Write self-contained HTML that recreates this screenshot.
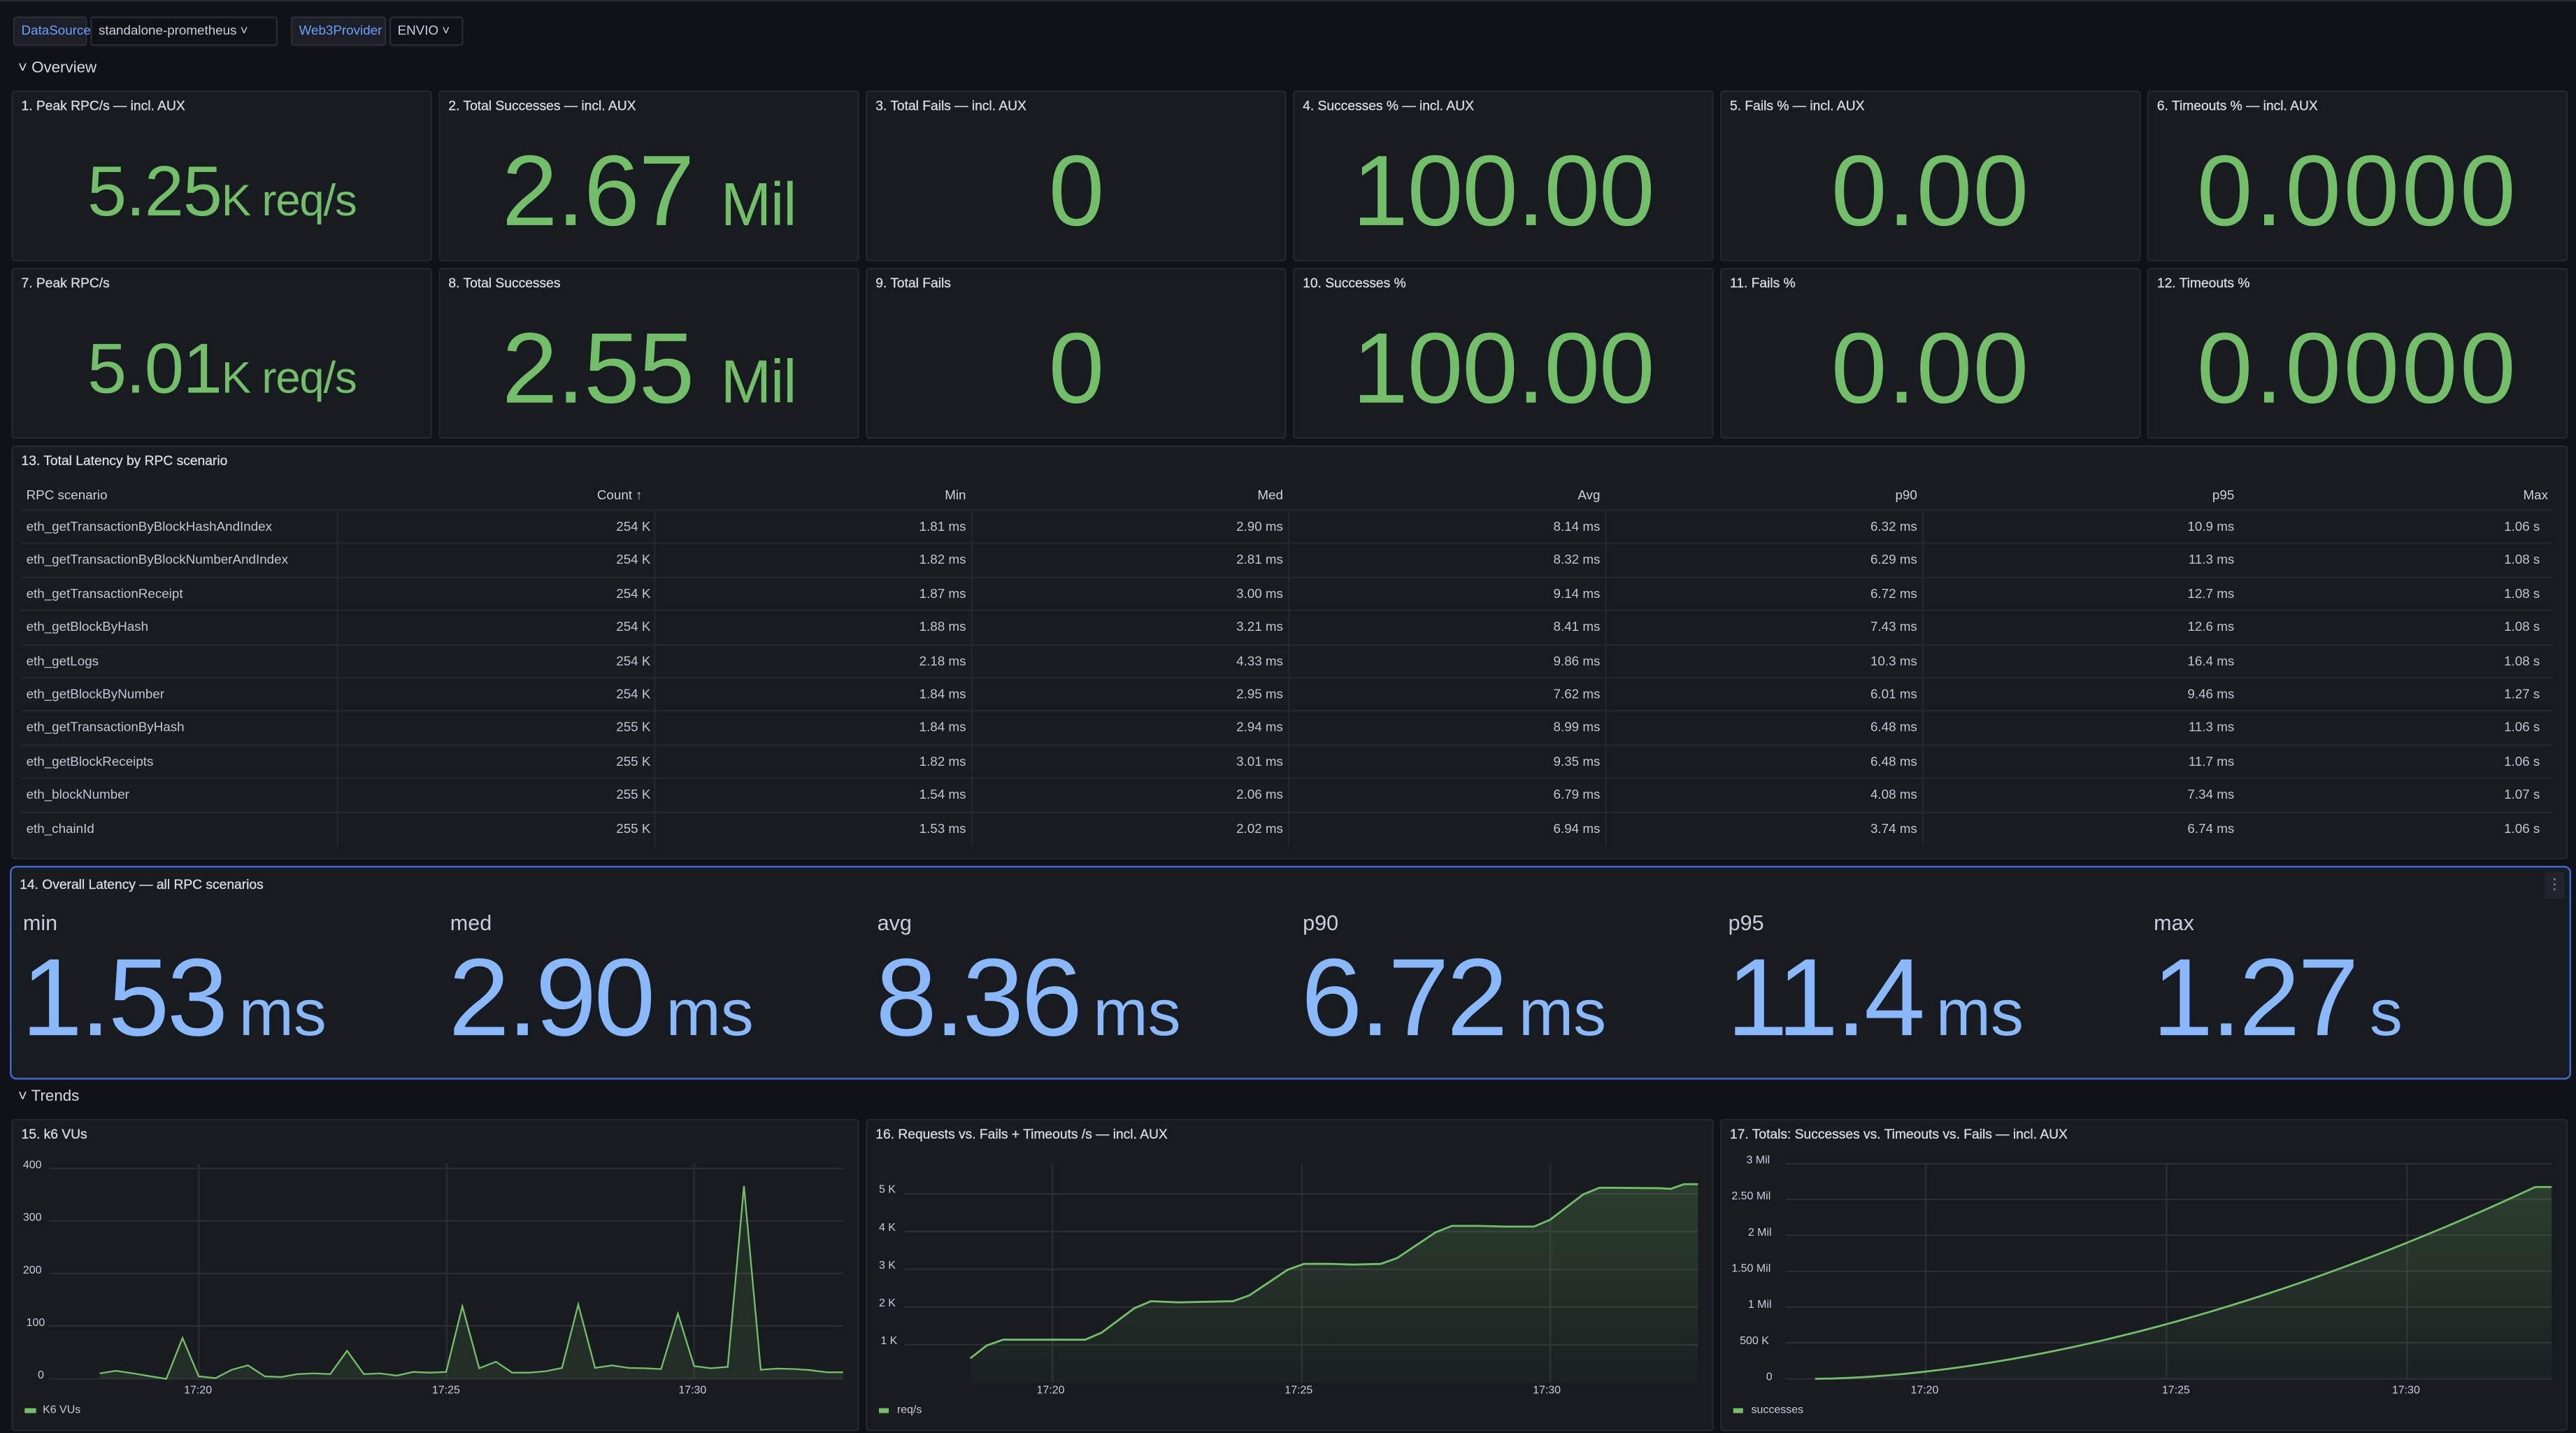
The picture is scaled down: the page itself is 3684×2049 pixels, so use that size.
<!DOCTYPE html>
<html><head><meta charset="utf-8">
<style>
html,body{margin:0;padding:0;background:#111217;width:3684px;height:2048px;overflow:hidden}
#w{position:absolute;left:0;top:0;width:1568px;height:872px;transform:scale(2.34949);transform-origin:0 0;font-family:"Liberation Sans",sans-serif;color:#ccccdc}
.a{position:absolute}
.p{position:absolute;background:#181b1f;border:1px solid #25272c;border-radius:2px;box-sizing:border-box}
.t{position:absolute;left:5px;top:4px;font-size:8.2px;color:#d8d9e0;white-space:nowrap;-webkit-text-stroke:0.15px #d8d9e0}
.s{position:absolute;left:0;right:0;text-align:center;color:#73bf69;line-height:1;white-space:nowrap;letter-spacing:-0.5px}
.ctl{position:absolute;top:10px;height:18px;border:1px solid #2a2d33;box-sizing:border-box;font-size:8px;line-height:16px;padding:0 4px;white-space:nowrap;border-radius:2px}
.lbl{background:#1d2026;color:#6e9fff}
.sel{background:#111217;color:#ccccdc}
.row{position:absolute;left:5px;right:8px;height:20.4px;border-top:1px solid #25272c;font-size:8px;line-height:20px;color:#c4c5cf}
.c{position:absolute;top:0;white-space:nowrap}
.r{text-align:right}
.vs{position:absolute;top:0;height:20.4px;width:1px;background:#25272c}
.lat{position:absolute;top:0;color:#8ab8ff;white-space:nowrap}
.ax{position:absolute;font-size:6.8px;color:#ccccdc;white-space:nowrap}
</style></head><body><div id="w">
<div class="a" style="left:0;top:0;width:1568px;height:1px;background:#25272c"></div>
<div class="ctl lbl" style="left:8px;width:45px">DataSource</div>
<div class="ctl sel" style="left:55px;width:114px">standalone-prometheus &#709;</div>
<div class="ctl lbl" style="left:177px;width:58px">Web3Provider</div>
<div class="ctl sel" style="left:237px;width:45px">ENVIO &#709;</div>
<div class="a" style="left:11px;top:36px;font-size:9.5px;color:#d8d9e0">&#709; Overview</div>

<div class="p" style="left:7px;top:55px;width:256px;height:104px"><div class="t">1. Peak RPC/s — incl. AUX</div><div class="s" style="top:40px;font-size:43px">5.25<span style="font-size:27px">K req/s</span></div></div>
<div class="p" style="left:267px;top:55px;width:256px;height:104px"><div class="t">2. Total Successes — incl. AUX</div><div class="s" style="top:30px;font-size:61px">2.67 <span style="font-size:37px">Mil</span></div></div>
<div class="p" style="left:527px;top:55px;width:256px;height:104px"><div class="t">3. Total Fails — incl. AUX</div><div class="s" style="top:30px;font-size:61px">0</div></div>
<div class="p" style="left:787px;top:55px;width:256px;height:104px"><div class="t">4. Successes % — incl. AUX</div><div class="s" style="top:30px;font-size:61px">100.00</div></div>
<div class="p" style="left:1047px;top:55px;width:256px;height:104px"><div class="t">5. Fails % — incl. AUX</div><div class="s" style="top:30px;font-size:61px;letter-spacing:0.5px">0.00</div></div>
<div class="p" style="left:1307px;top:55px;width:256px;height:104px"><div class="t">6. Timeouts % — incl. AUX</div><div class="s" style="top:30px;font-size:61px;letter-spacing:1.5px">0.0000</div></div>
<div class="p" style="left:7px;top:163px;width:256px;height:104px"><div class="t">7. Peak RPC/s</div><div class="s" style="top:40px;font-size:43px">5.01<span style="font-size:27px">K req/s</span></div></div>
<div class="p" style="left:267px;top:163px;width:256px;height:104px"><div class="t">8. Total Successes</div><div class="s" style="top:30px;font-size:61px">2.55 <span style="font-size:37px">Mil</span></div></div>
<div class="p" style="left:527px;top:163px;width:256px;height:104px"><div class="t">9. Total Fails</div><div class="s" style="top:30px;font-size:61px">0</div></div>
<div class="p" style="left:787px;top:163px;width:256px;height:104px"><div class="t">10. Successes %</div><div class="s" style="top:30px;font-size:61px">100.00</div></div>
<div class="p" style="left:1047px;top:163px;width:256px;height:104px"><div class="t">11. Fails %</div><div class="s" style="top:30px;font-size:61px;letter-spacing:0.5px">0.00</div></div>
<div class="p" style="left:1307px;top:163px;width:256px;height:104px"><div class="t">12. Timeouts %</div><div class="s" style="top:30px;font-size:61px;letter-spacing:1.5px">0.0000</div></div>

<div class="p" style="left:7px;top:271px;width:1556px;height:252px">
<div class="t">13. Total Latency by RPC scenario</div>
<div class="a" style="left:5px;right:8px;top:24px;height:15px;font-size:8px;line-height:12px;color:#d0d1d9">
<span class="c" style="left:3px">RPC scenario</span>
<span class="c r" style="right:1163px">Count &#8593;</span>
<span class="c r" style="right:966px">Min</span>
<span class="c r" style="right:773px">Med</span>
<span class="c r" style="right:580px">Avg</span>
<span class="c r" style="right:387px">p90</span>
<span class="c r" style="right:194px">p95</span>
<span class="c r" style="right:3px">Max</span>
</div>
<div id="rows"></div>
</div>

<div class="p" style="left:6px;top:527px;width:1559px;height:130px;border:1.5px solid #3d71d9;border-radius:4px">
<div class="t" style="top:6px">14. Overall Latency — all RPC scenarios</div>
<div class="a" style="right:3px;top:3px;width:12px;height:16px;background:#22252b;color:#999;font-size:9px;text-align:center;line-height:14px">&#8942;</div>
<div id="lat"></div>
</div>

<div class="a" style="left:11px;top:662px;font-size:9.5px;color:#d8d9e0">&#709; Trends</div>

<div class="p" style="left:7px;top:681px;width:516px;height:190px"><div class="t">15. k6 VUs</div></div>
<div class="p" style="left:527px;top:681px;width:516px;height:190px"><div class="t">16. Requests vs. Fails + Timeouts /s — incl. AUX</div></div>
<div class="p" style="left:1047px;top:681px;width:516px;height:190px"><div class="t">17. Totals: Successes vs. Timeouts vs. Fails — incl. AUX</div></div>

<svg class="a" style="left:0;top:523.5px" width="553" height="348" viewBox="0 0 1568 1568" preserveAspectRatio="none">
<g stroke="#2a2d33" stroke-width="1">
<path vector-effect="non-scaling-stroke" d="M85 843H1455M85 987H1455M85 1131H1455M85 1275H1455M85 1420H1455M343 830V1420M771 830V1420M1198 830V1420"/>
</g>
<path id="vu" fill="rgba(115,191,105,0.12)" stroke="none" d=""/>
<polyline id="vul" fill="none" stroke="#73bf69" stroke-width="1" vector-effect="non-scaling-stroke" points=""/>
</svg>

<svg class="a" style="left:523.5px;top:676.7px" width="1044.5" height="194.9" viewBox="0 0 1568 1374" preserveAspectRatio="none">
<defs><linearGradient id="g" x1="0" y1="0" x2="0" y2="1"><stop offset="0" stop-color="#73bf69" stop-opacity="0.22"/><stop offset="1" stop-color="#73bf69" stop-opacity="0.03"/></linearGradient></defs>
<g stroke="#2a2d33" fill="none">
<path vector-effect="non-scaling-stroke" d="M40 349H765M40 511H765M40 673H765M40 835H765M40 997H765M175 220V1160M403 220V1160M630 220V1160"/>
<path vector-effect="non-scaling-stroke" d="M845 220H1545M845 373H1545M845 527H1545M845 682H1545M845 835H1545M845 988H1545M845 1143H1545M973 220V1143M1193 220V1143M1413 220V1143"/>
</g>
<path fill="url(#g)" d="M100 1055L115 1000L130 975L205 975L220 945L250 840L265 810L290 815L340 810L355 785L390 675L405 650L430 650L450 653L475 650L490 625L525 515L540 487L565 487L590 490L615 490L630 460L660 352L675 323L730 325L740 328L752 308L765 308L765 1160L100 1160Z"/>
<polyline fill="none" stroke="#73bf69" stroke-width="1.2" vector-effect="non-scaling-stroke" points="100,1055 115,1000 130,975 205,975 220,945 250,840 265,810 290,815 340,810 355,785 390,675 405,650 430,650 450,653 475,650 490,625 525,515 540,487 565,487 590,490 615,490 630,460 660,352 675,323 730,325 740,328 752,308 765,308"/>
<path id="sf" fill="url(#g)" d=""/>
<polyline id="sl" fill="none" stroke="#73bf69" stroke-width="1.2" vector-effect="non-scaling-stroke" points=""/>
</svg>

<div class="ax" style="left:14px;top:706px">400</div><div class="ax" style="left:14px;top:738px">300</div><div class="ax" style="left:14px;top:770px">200</div><div class="ax" style="left:16px;top:802px">100</div><div class="ax" style="left:23px;top:834px">0</div>
<div class="ax" style="left:112px;top:843px">17:20</div><div class="ax" style="left:263px;top:843px">17:25</div><div class="ax" style="left:413px;top:843px">17:30</div>
<div class="a" style="left:15px;top:857px;width:7px;height:2.5px;background:#73bf69"></div><div class="ax" style="left:26px;top:855px">K6 VUs</div>

<div class="ax" style="left:535px;top:721px">5 K</div><div class="ax" style="left:535px;top:744px">4 K</div><div class="ax" style="left:535px;top:767px">3 K</div><div class="ax" style="left:535px;top:790px">2 K</div><div class="ax" style="left:536px;top:813px">1 K</div>
<div class="ax" style="left:631px;top:843px">17:20</div><div class="ax" style="left:782px;top:843px">17:25</div><div class="ax" style="left:933px;top:843px">17:30</div>
<div class="a" style="left:535px;top:857px;width:6px;height:3px;background:#73bf69"></div><div class="ax" style="left:546px;top:855px">req/s</div>

<div class="ax" style="left:1063px;top:703px">3 Mil</div><div class="ax" style="left:1054px;top:725px">2.50 Mil</div><div class="ax" style="left:1064px;top:747px">2 Mil</div><div class="ax" style="left:1054px;top:769px">1.50 Mil</div><div class="ax" style="left:1064px;top:791px">1 Mil</div><div class="ax" style="left:1059px;top:813px">500 K</div><div class="ax" style="left:1075px;top:835px">0</div>
<div class="ax" style="left:1163px;top:843px">17:20</div><div class="ax" style="left:1316px;top:843px">17:25</div><div class="ax" style="left:1456px;top:843px">17:30</div>
<div class="a" style="left:1055px;top:857px;width:6px;height:3px;background:#73bf69"></div><div class="ax" style="left:1066px;top:855px">successes</div>
</div>
<script>
var d=[["eth_getTransactionByBlockHashAndIndex","254 K","1.81 ms","2.90 ms","8.14 ms","6.32 ms","10.9 ms","1.06 s"],
["eth_getTransactionByBlockNumberAndIndex","254 K","1.82 ms","2.81 ms","8.32 ms","6.29 ms","11.3 ms","1.08 s"],
["eth_getTransactionReceipt","254 K","1.87 ms","3.00 ms","9.14 ms","6.72 ms","12.7 ms","1.08 s"],
["eth_getBlockByHash","254 K","1.88 ms","3.21 ms","8.41 ms","7.43 ms","12.6 ms","1.08 s"],
["eth_getLogs","254 K","2.18 ms","4.33 ms","9.86 ms","10.3 ms","16.4 ms","1.08 s"],
["eth_getBlockByNumber","254 K","1.84 ms","2.95 ms","7.62 ms","6.01 ms","9.46 ms","1.27 s"],
["eth_getTransactionByHash","255 K","1.84 ms","2.94 ms","8.99 ms","6.48 ms","11.3 ms","1.06 s"],
["eth_getBlockReceipts","255 K","1.82 ms","3.01 ms","9.35 ms","6.48 ms","11.7 ms","1.06 s"],
["eth_blockNumber","255 K","1.54 ms","2.06 ms","6.79 ms","4.08 ms","7.34 ms","1.07 s"],
["eth_chainId","255 K","1.53 ms","2.02 ms","6.94 ms","3.74 ms","6.74 ms","1.06 s"]];
var R=[1158,966,773,580,387,194,8],S=[192,385,578,771,964,1157],h="";
d.forEach(function(r,i){h+='<div class="row" style="top:'+(38+i*20.4)+'px"><span class="c" style="left:3px">'+r[0]+'</span>';
for(var j=1;j<8;j++)h+='<span class="c r" style="right:'+R[j-1]+'px">'+r[j]+'</span>';
S.forEach(function(x){h+='<div class="vs" style="left:'+x+'px"></div>'});h+='</div>'});
document.getElementById('rows').innerHTML=h;
var L=[["min","1.53","ms"],["med","2.90","ms"],["avg","8.36","ms"],["p90","6.72","ms"],["p95","11.4","ms"],["max","1.27","s"]],X=[7,267,527,786,1045,1304],g="";
L.forEach(function(l,i){g+='<div class="lat" style="left:'+X[i]+'px;top:27px;font-size:13px;color:#ccccdc;line-height:1">'+l[0]+'</div><div class="lat" style="left:'+(X[i]-1)+'px;top:46px;font-size:67px;line-height:1;letter-spacing:-1.5px">'+l[1]+'<span style="font-size:40px;letter-spacing:0;margin-left:8px">'+l[2]+'</span></div>'});
document.getElementById('lat').innerHTML=g;
var p=[[172,1405],[200,1398],[230,1405],[260,1413],[287,1420],[315,1308],[343,1413],[372,1418],[400,1395],[428,1383],[457,1413],[485,1415],[513,1407],[542,1405],[570,1407],[599,1343],[628,1407],[656,1405],[685,1411],[713,1401],[742,1403],[770,1401],[798,1221],[827,1391],[856,1373],[884,1403],[913,1403],[942,1399],[970,1390],[998,1216],[1027,1390],[1056,1383],[1085,1390],[1113,1391],[1141,1393],[1170,1241],[1198,1385],[1227,1391],[1256,1387],[1284,891],[1313,1395],[1341,1392],[1370,1393],[1398,1396],[1427,1402],[1455,1402]];
var s=p.map(function(q){return q.join(',')}).join(' ');
document.getElementById('vul').setAttribute('points',s);
document.getElementById('vu').setAttribute('d','M172 1420L'+s.replace(/ /g,'L').replace(/,/g,' ')+'L1455 1420Z');
var q=[];for(var k=0;k<=40;k++){var t=k/40,x=872+t*(1530-872),y=1143-823*Math.pow(t,1.75);q.push(x.toFixed(1)+','+y.toFixed(1));}
q.push('1545,320');var qs=q.join(' ');
document.getElementById('sl').setAttribute('points',qs);
document.getElementById('sf').setAttribute('d','M'+qs.replace(/ /g,'L').replace(/,/g,' ')+'L1545 1143L872 1143Z');
</script>
</body></html>
